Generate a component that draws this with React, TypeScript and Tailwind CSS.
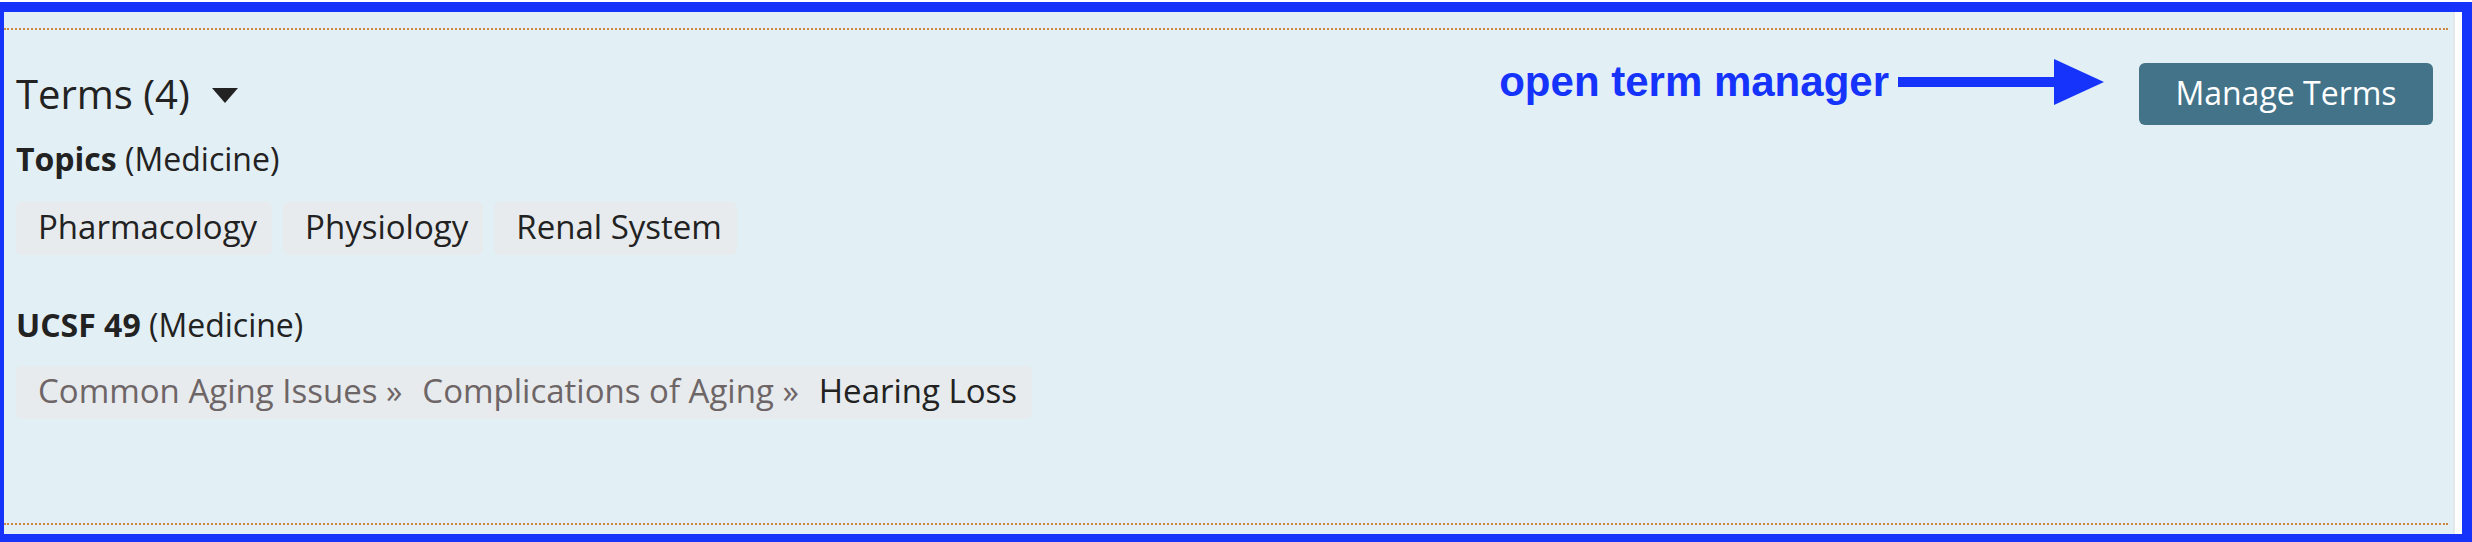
const TOPICS = ["Pharmacology", "Physiology", "Renal System"];
const TRAIL = ["Common Aging Issues", "Complications of Aging"];

function Chip({ children }: { children: React.ReactNode }) {
  return (
    <div className="flex h-[53px] items-center rounded-[6px] bg-[#e7ebed] pl-[22px] pr-[15px] pb-[4px] text-[33px] text-[#222222]">
      {children}
    </div>
  );
}

function Label({ name, scheme }: { name: string; scheme: string }) {
  return (
    <div className="text-[32px] leading-[40px] text-[#222222]">
      <span className="font-bold">{name}</span> ({scheme})
    </div>
  );
}

export default function App() {
  return (
    <div className="h-[542px] w-[2472px] bg-white pt-[2px] font-['Open_Sans',sans-serif]">
      <div className="flex h-[540px] border-t-[10px] border-r-[10px] border-b-[8px] border-l-[4px] border-[#1533fb]">
        <div className="flex flex-1 flex-col border-r-2 border-[#e4e8ea] bg-[#e2eff5] pt-[16px] pb-[9px]">
          <div className="mr-[5px] border-t-2 border-dotted border-[#cd853f]" />

          <div className="pl-[12px]">
            {/* header row */}
            <div className="mt-[33px] flex items-center justify-between pr-[20px]">
              <div className="flex items-center">
                <span className="text-[40px] leading-[48px] text-[#222222]">Terms (4)</span>
                <svg width="26" height="15" viewBox="0 0 26 15" className="ml-[22px] mt-[3px]">
                  <polygon points="0,0 26,0 13,15" fill="#222222" />
                </svg>
              </div>

              <div className="flex items-start">
                {/* annotation */}
                <div className="-mt-[5px] flex items-center">
                  <span className="font-['Liberation_Sans',Arial,sans-serif] text-[42px] font-bold leading-[48px] text-[#1533fb]">
                    open term manager
                  </span>
                  <svg width="206" height="46" viewBox="0 0 206 46" className="ml-[9px]">
                    <rect x="0" y="18" width="157" height="10" fill="#1533fb" />
                    <polygon points="156,0 206,23 156,46" fill="#1533fb" />
                  </svg>
                </div>
                <button className="ml-[35px] h-[62px] w-[294px] rounded-[6px] bg-[#427389] pb-[2px] text-[32px] text-white">
                  Manage Terms
                </button>
              </div>
            </div>

            <div className="mt-[14px]">
              <Label name="Topics" scheme="Medicine" />
            </div>
            <div className="mt-[23px] flex gap-[11px]">
              {TOPICS.map((t) => (
                <Chip key={t}>{t}</Chip>
              ))}
            </div>

            <div className="mt-[50px]">
              <Label name="UCSF 49" scheme="Medicine" />
            </div>
            <div className="mt-[21px] flex">
              <Chip>
                {TRAIL.map((t) => (
                  <span key={t} className="mr-[20px] text-[#6e6567]">
                    {t} »
                  </span>
                ))}
                <span>Hearing Loss</span>
              </Chip>
            </div>
          </div>

          <div className="flex-1" />
          <div className="mr-[5px] border-t-2 border-dotted border-[#cd853f]" />
        </div>
        <div className="w-[7px] bg-white" />
      </div>
    </div>
  );
}
